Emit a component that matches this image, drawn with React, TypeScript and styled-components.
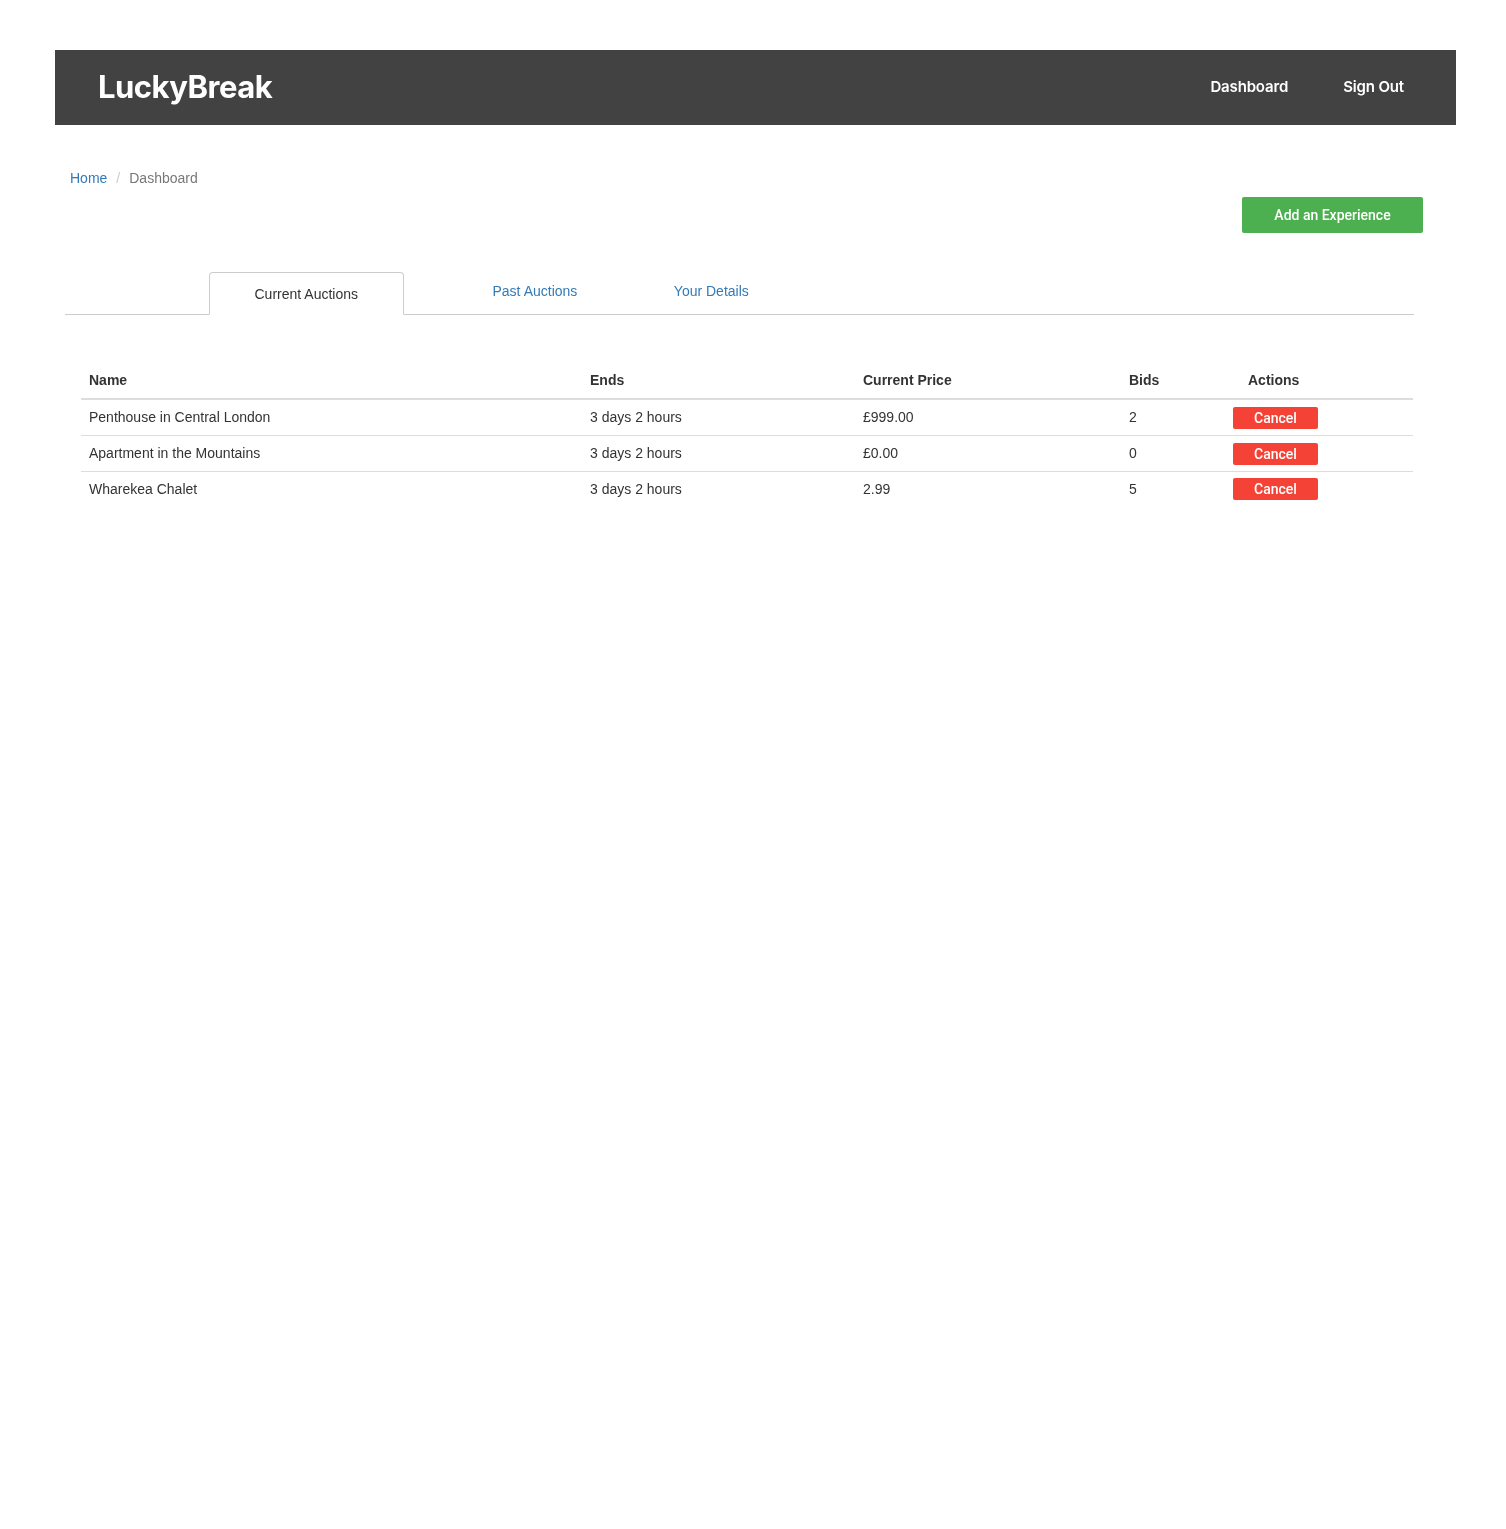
import styled, { createGlobalStyle } from "styled-components";

const GlobalStyle = createGlobalStyle`
  * {
    box-sizing: border-box;
  }
  body {
    margin: 0;
    background: #fff;
    color: #333;
    font-family: "Liberation Sans", Arial, sans-serif;
    font-size: 14px;
    line-height: 20px;
  }
`;

const Page = styled.div`
  min-height: 1529px;
  padding: 50px 50px 0 55px;
  will-change: opacity;
`;
const Navbar = styled.header`
  display: flex;
  align-items: center;
  justify-content: space-between;
  height: 75px;
  padding: 0 52px 0 43px;
  background-color: #424242;
  color: #fff;
  font-family: Inter, "Open Sans", sans-serif;
`;
const Brand = styled.a`
  margin-top: -2px;
  font-size: 31px;
  line-height: 75px;
  font-weight: 700;
  letter-spacing: -0.5px;
`;
const NavLinks = styled.nav`
  display: flex;
  gap: 55px;
  margin-top: -2px;
`;
const NavLink = styled.a`
  font-size: 15px;
  font-weight: 600;
  letter-spacing: -0.15px;
`;
const Breadcrumb = styled.ol`
  display: flex;
  height: 20px;
  list-style: none;
  margin: 43px 0 0;
  padding: 0 0 0 15px;
  color: #777;
`;
const Crumb = styled.li`
  & + &::before {
    content: "/";
    padding: 0 9px;
    color: #ccc;
  }
`;
const LinkText = styled.a`
  color: #337ab7;
`;
const ActionBar = styled.div`
  display: flex;
  justify-content: flex-end;
  margin-top: 9px;
  padding-right: 33px;
`;
const AddButton = styled.button`
  width: 181px;
  height: 36px;
  border: 0;
  border-radius: 2px;
  background-color: #4caf50;
  color: #fff;
  font-family: Roboto, sans-serif;
  font-size: 14px;
  font-weight: 500;
`;
const Tabs = styled.ul`
  display: flex;
  align-items: flex-start;
  height: 43px;
  list-style: none;
  margin: 39px 42px 0 10px;
  padding: 0 0 0 143.5px;
  border-bottom: 1px solid #ccc;
`;
const Tab = styled.li<{ $active?: boolean; $gap: number }>`
  margin-left: ${(p) => p.$gap}px;
  padding: ${(p) => (p.$active ? "11px 45px 10px" : "9px 45px 0")};
  ${(p) =>
    p.$active &&
    `
    height: 43px;
    background: #fff;
    border: 1px solid #ccc;
    border-bottom-color: #fff;
    border-radius: 4px 4px 0 0;
    color: #333;
  `}
`;
const AuctionTable = styled.table`
  width: 1332px;
  margin: 47px 0 0 26px;
  border-collapse: collapse;
  table-layout: fixed;
`;
const HeadCell = styled.th<{ $width: number }>`
  width: ${(p) => p.$width}px;
  height: 37px;
  padding: 0 8px;
  text-align: left;
  font-weight: 700;
  border-bottom: 2px solid #ddd;
`;
const ActionsHead = styled(HeadCell)`
  padding-left: 52px;
`;
const CancelButton = styled.button`
  display: block;
  width: 85px;
  height: 22px;
  margin-top: 2px;
  padding: 0;
  border: 0;
  border-radius: 2px;
  background-color: #f44336;
  color: #fff;
  font-family: Roboto, sans-serif;
  font-size: 14px;
  font-weight: 500;
`;
const Row = styled.tr`
  & + & td {
    border-top: 1px solid #ddd;
  }
  &:last-child ${CancelButton} {
    margin-top: 0;
  }
`;
const Cell = styled.td`
  height: 36px;
  padding: 0 8px;
  vertical-align: middle;
`;
const ActionCell = styled(Cell)`
  padding-left: 37px;
`;

const auctions = [
  { name: "Penthouse in Central London", ends: "3 days 2 hours", price: "£999.00", bids: 2 },
  { name: "Apartment in the Mountains", ends: "3 days 2 hours", price: "£0.00", bids: 0 },
  { name: "Wharekea Chalet", ends: "3 days 2 hours", price: "2.99", bids: 5 },
];

export default function App() {
  return (
    <Page>
      <GlobalStyle />
      <Navbar>
        <Brand>LuckyBreak</Brand>
        <NavLinks>
          <NavLink>Dashboard</NavLink>
          <NavLink>Sign Out</NavLink>
        </NavLinks>
      </Navbar>
      <Breadcrumb>
        <Crumb>
          <LinkText>Home</LinkText>
        </Crumb>
        <Crumb>Dashboard</Crumb>
      </Breadcrumb>
      <ActionBar>
        <AddButton>Add an Experience</AddButton>
      </ActionBar>
      <Tabs>
        <Tab $active $gap={0}>Current Auctions</Tab>
        <Tab $gap={43.5}>
          <LinkText>Past Auctions</LinkText>
        </Tab>
        <Tab $gap={6.5}>
          <LinkText>Your Details</LinkText>
        </Tab>
      </Tabs>
      <AuctionTable>
        <thead>
          <tr>
            <HeadCell $width={501}>Name</HeadCell>
            <HeadCell $width={273}>Ends</HeadCell>
            <HeadCell $width={266}>Current Price</HeadCell>
            <HeadCell $width={75}>Bids</HeadCell>
            <ActionsHead $width={217}>Actions</ActionsHead>
          </tr>
        </thead>
        <tbody>
          {auctions.map((a) => (
            <Row key={a.name}>
              <Cell>{a.name}</Cell>
              <Cell>{a.ends}</Cell>
              <Cell>{a.price}</Cell>
              <Cell>{a.bids}</Cell>
              <ActionCell>
                <CancelButton>Cancel</CancelButton>
              </ActionCell>
            </Row>
          ))}
        </tbody>
      </AuctionTable>
    </Page>
  );
}
